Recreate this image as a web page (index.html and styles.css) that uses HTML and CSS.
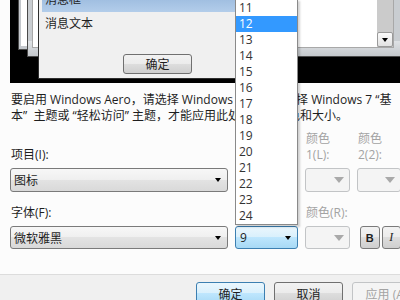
FILE: index.html
```html
<!DOCTYPE html>
<html lang="zh-CN">
<head>
  <meta charset="UTF-8" />
  <title>窗口颜色和外观</title>
  <link rel="stylesheet" href="styles.css">
</head>
<body>
  <div class="dialog">
    <!-- Preview of the theme -->
    <div class="preview">
      <div class="win win-inactive"><div class="pane"></div></div>
      <div class="win win-active">
        <div class="pane">
          <div class="scrollbar"><span class="scroll-btn"><i class="arrow"></i></span></div>
        </div>
      </div>
      <div class="msgbox">
        <div class="msg-title"><span>消息框</span></div>
        <div class="msg-text">消息文本</div>
        <div class="msg-actions"><span class="btn">确定</span></div>
      </div>
    </div>

    <p class="note">要启用 Windows Aero，请选择 Windows 主题，或选择 Windows 7 “基<br>本”&nbsp; 主题或 “轻松访问” 主题，才能应用此处选择的颜色和大小。</p>

    <div class="fields">
      <label class="field-label">项目(I):</label>
      <label class="field-label">大小(Z):</label>
      <label class="field-label muted">颜色<br>1(L):</label>
      <label class="field-label muted">颜色<br>2(2):</label>

      <div class="combo"><span>图标</span><i class="arrow"></i></div>
      <div class="combo"><span>16</span><i class="arrow"></i></div>
      <div class="color-btn"><i class="arrow"></i></div>
      <div class="color-btn"><i class="arrow"></i></div>

      <label class="field-label">字体(F):</label>
      <label class="field-label">大小(E):</label>
      <label class="field-label muted">颜色(R):</label>
      <span></span>

      <div class="combo"><span>微软雅黑</span><i class="arrow"></i></div>
      <div class="combo focused"><span>9</span><i class="arrow"></i></div>
      <div class="color-btn"><i class="arrow"></i></div>
      <div class="style-btns">
        <span class="sbtn bold">B</span>
        <span class="sbtn italic">I</span>
      </div>
    </div>

    <div class="buttons">
      <span class="btn default">确定</span>
      <span class="btn">取消</span>
      <span class="btn disabled">应用 (A)</span>
    </div>
  </div>

  <!-- Open font size list -->
  <ul class="droplist">
    <li>11</li>
    <li class="selected">12</li>
    <li>13</li>
    <li>14</li>
    <li>15</li>
    <li>16</li>
    <li>17</li>
    <li>18</li>
    <li>19</li>
    <li>20</li>
    <li>21</li>
    <li>22</li>
    <li>23</li>
    <li>24</li>
  </ul>
</body>
</html>
```

FILE: styles.css
```css
* {
  box-sizing: border-box;
}
html,
body {
  margin: 0;
}
body {
  width: 400px;
  height: 300px;
  overflow: hidden;
  position: relative;
  background: #fcfcfc;
  font-family: "Open Sans", "Noto Sans CJK SC", sans-serif;
  font-size: 12px;
  color: #1e1e1e;
}
.dialog {
  width: 430px;
}

/* preview canvas */
.preview {
  position: relative;
  height: 83px;
  margin-left: 10px;
  background: #000;
  overflow: hidden;
}
.win {
  position: absolute;
  top: -20px;
  display: flex;
  border: 1px solid #4a4a4a;
}
.win-inactive {
  left: 8px;
  width: 200px;
  height: 70px;
  padding: 0 3px 3px 2px;
  background: #c3c7cc;
}
.win-inactive .pane {
  flex: 1;
  background: #fff;
}
.win-active {
  left: 17px;
  width: 374px;
  height: 77px;
  padding: 0 6px 8px 4px;
  background: linear-gradient(#c9cdd1, #c9cdd1 80%, #dfe2e5 80%, #c4c8cc);
}
.win-active .pane {
  flex: 1;
  display: flex;
  justify-content: flex-end;
  background: #fff;
  border: 1px solid #a8a8a8;
}
.scrollbar {
  width: 16px;
  display: flex;
  flex-direction: column;
  justify-content: flex-end;
  background: #cbcbcb;
}
.scroll-btn {
  height: 15px;
  display: flex;
  align-items: center;
  justify-content: center;
  background: linear-gradient(#fafafa, #e2e2e2);
  border: 1px solid #9a9a9a;
  border-radius: 2px;
}
.msgbox {
  position: absolute;
  left: 28px;
  top: 0;
  width: 239px;
  height: 79px;
  padding: 0 2px;
  background: #f0f0f0;
  border: 1px solid #2e2e2e;
  border-top: none;
}
.msg-title {
  height: 12px;
  margin: 0 1px;
  overflow: hidden;
  background: linear-gradient(#a1bfe1, #b3cdea);
}
.msg-title span {
  display: block;
  margin-top: -7px;
  padding-left: 3px;
  line-height: 14px;
  color: #1e1e1e;
}
.msg-text {
  margin-top: 5px;
  padding-left: 4px;
  line-height: 14px;
}
.msg-actions {
  display: flex;
  justify-content: center;
  margin-top: 23px;
}
.msg-actions .btn {
  height: 20px;
}

.note {
  margin: 9px 0 0 11px;
  line-height: 16px;
  white-space: nowrap;
}

/* item / font grid */
.fields {
  display: grid;
  grid-template-columns: 218px 63px 45px 44px;
  grid-template-rows: 39px 24px 24px 23px;
  column-gap: 7px;
  row-gap: 5px;
  margin: 0 0 0 10px;
}
.field-label {
  align-self: end;
  line-height: 16px;
  padding-left: 1px;
}
.muted {
  color: #a3a3a3;
}
.combo {
  display: flex;
  align-items: center;
  justify-content: space-between;
  padding: 0 6px 0 3px;
  border: 1px solid #7a7a7a;
  border-radius: 3px;
  background: linear-gradient(#f7f7f7, #efefef 50%, #e3e3e3 50%, #d9d9d9);
}
.combo.focused {
  border-color: #3c7fb1;
  background: linear-gradient(#eaf6fd, #d9f0fc 50%, #bee6fd 50%, #a7d9f5);
  padding-left: 4px;
}
.arrow {
  width: 0;
  height: 0;
  border-left: 3.5px solid transparent;
  border-right: 3.5px solid transparent;
  border-top: 4px solid #000;
}
.color-btn {
  display: flex;
  align-items: center;
  justify-content: flex-end;
  padding-right: 5px;
  border: 1px solid #c2c4c6;
  border-radius: 3px;
  background: #f4f4f4;
}
.color-btn .arrow {
  border-left-width: 5px;
  border-right-width: 5px;
  border-top: 6px solid #a9a9a9;
}
.style-btns {
  display: flex;
  gap: 2px;
  padding-left: 3px;
}
.sbtn {
  width: 20px;
  display: flex;
  align-items: center;
  justify-content: center;
  border: 1px solid #7a7a7a;
  border-radius: 3px;
  background: linear-gradient(#f2f2f2, #ebebeb 50%, #dddddd 50%, #cfcfcf);
  font-family: "Liberation Sans", sans-serif;
  font-size: 11px;
}
.bold {
  font-weight: bold;
}
.italic {
  font-style: italic;
  font-family: "Liberation Serif", serif;
  font-size: 12px;
}

/* dialog buttons */
.buttons {
  display: flex;
  justify-content: flex-end;
  gap: 9px;
  margin-top: 25px;
  padding: 7px 9px 10px 0;
  background: #f0f0f0;
  border-top: 1px solid #dcdcdc;
}
.btn {
  width: 69px;
  height: 23px;
  display: flex;
  align-items: center;
  justify-content: center;
  border: 1px solid #707070;
  border-radius: 3px;
  background: linear-gradient(#f2f2f2, #ebebeb 50%, #dddddd 50%, #cfcfcf);
  color: #1e1e1e;
}
.btn.default {
  border-color: #3c7fb1;
  background: linear-gradient(#eaf6fd, #d9f0fc 50%, #bee6fd 50%, #a7d9f5);
}
.btn.disabled {
  border-color: #c2c4c6;
  background: #f4f4f4;
  color: #a3a3a3;
}

/* open list of the size combo */
.droplist {
  position: absolute;
  left: 235px;
  top: -1px;
  width: 63px;
  margin: 0;
  padding: 0;
  list-style: none;
  background: #fff;
  border: 1px solid #8a8a8a;
  box-shadow: 2px 2px 2px rgba(0, 0, 0, 0.18);
}
.droplist li {
  height: 16px;
  line-height: 16px;
  padding-left: 3px;
  color: #333;
}
.droplist li.selected {
  background: #3399ff;
  color: #fff;
}
```
